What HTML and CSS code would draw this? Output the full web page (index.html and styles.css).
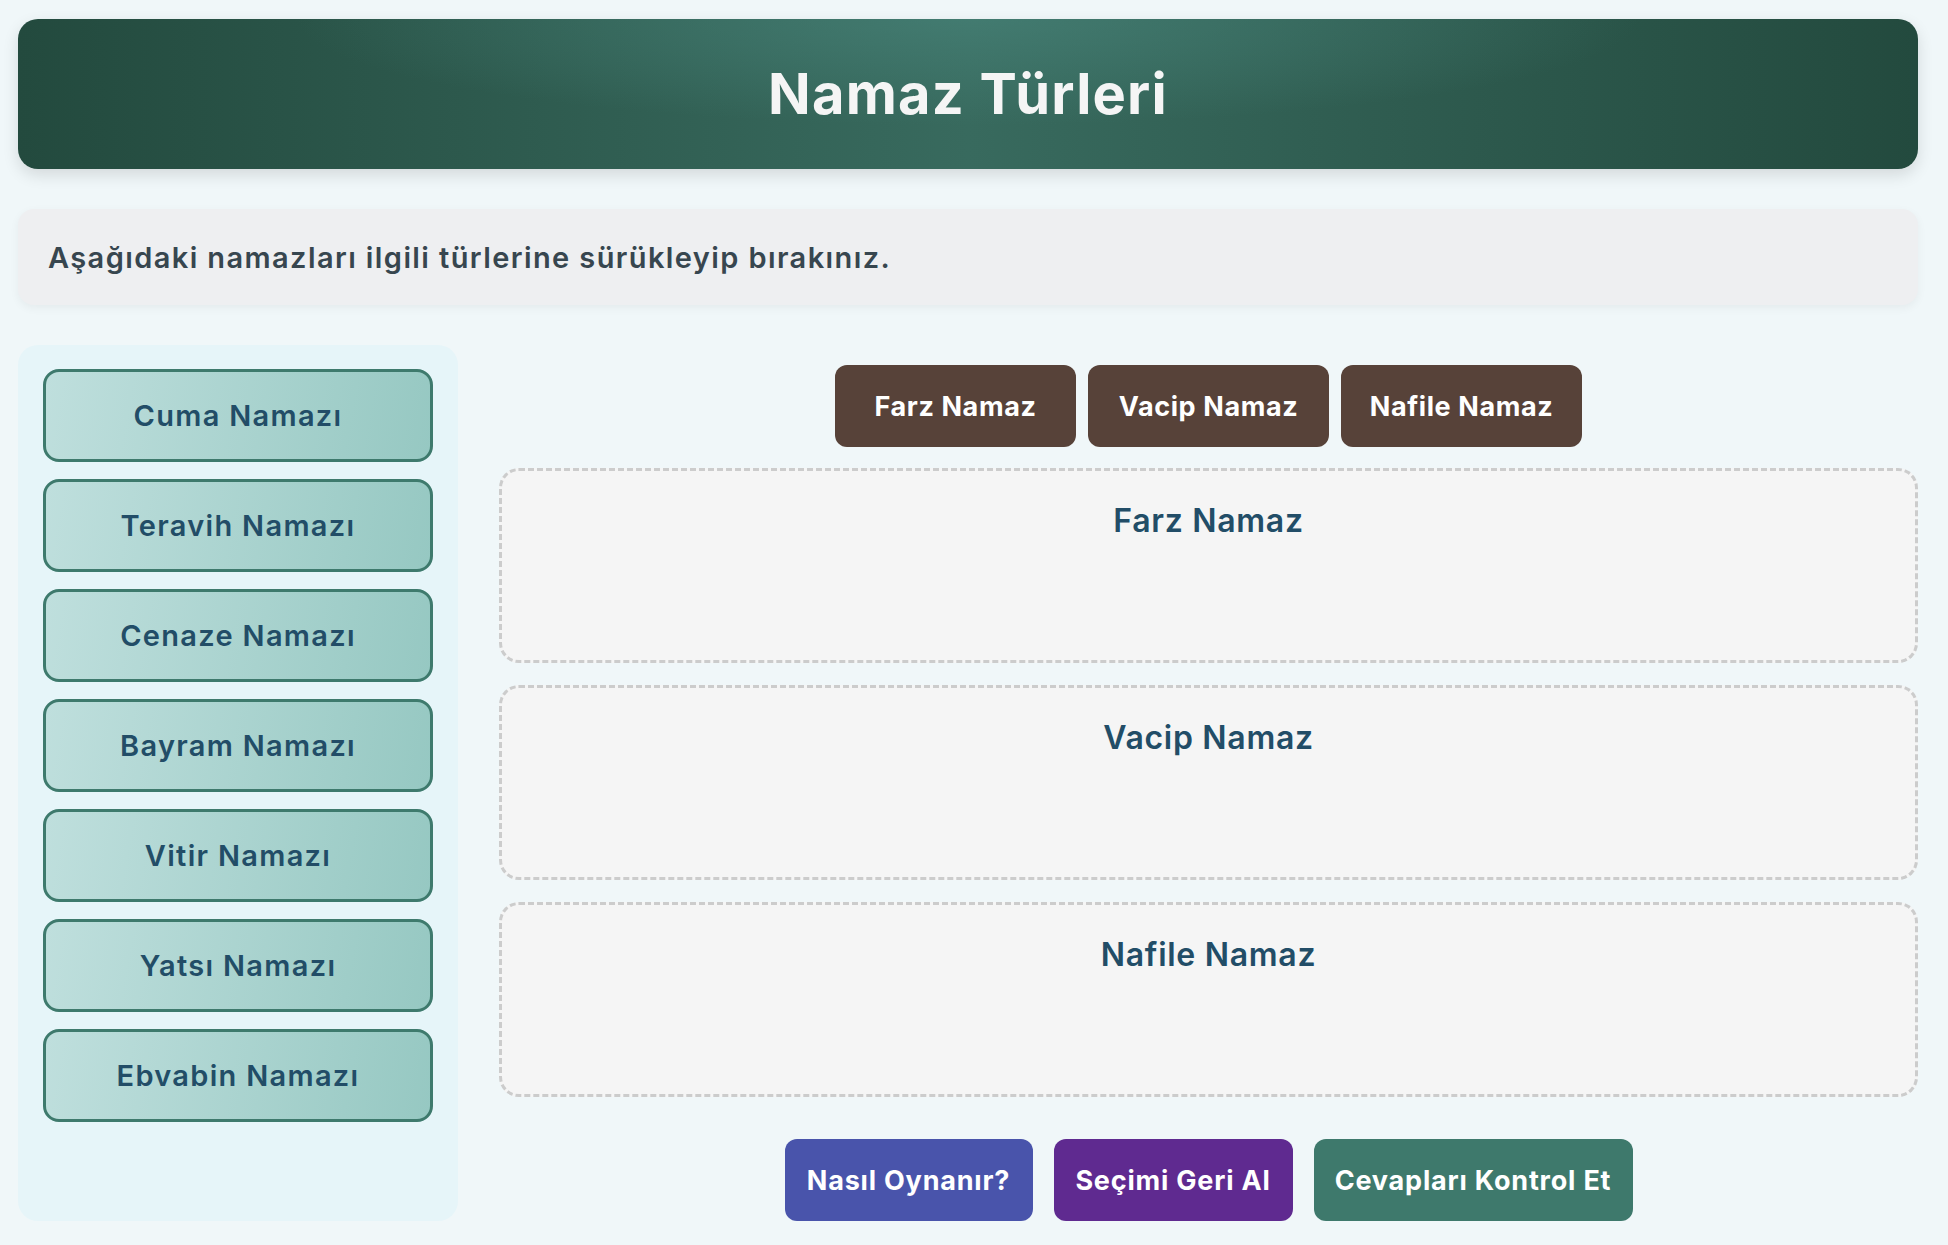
FILE: index.html
```html
<!DOCTYPE html>
<html lang="tr">

<head>
    <meta charset="UTF-8">
    <meta name="viewport" content="width=device-width, initial-scale=1.0">
    <title>Namaz Türleri</title>
    <link rel="stylesheet" href="styles.css">
</head>

<body>
    <div class="page">
        <header class="title-bar">
            <h1>Namaz Türleri</h1>
        </header>

        <div class="instructions">
            <p>Aşağıdaki namazları ilgili türlerine sürükleyip bırakınız.</p>
        </div>

        <div class="game">
            <div class="prayer-list">
                <div class="prayer">Cuma Namazı</div>
                <div class="prayer">Teravih Namazı</div>
                <div class="prayer">Cenaze Namazı</div>
                <div class="prayer">Bayram Namazı</div>
                <div class="prayer">Vitir Namazı</div>
                <div class="prayer">Yatsı Namazı</div>
                <div class="prayer">Ebvabin Namazı</div>
            </div>

            <div class="board">
                <div class="category-buttons">
                    <button class="category-btn">Farz Namaz</button>
                    <button class="category-btn">Vacip Namaz</button>
                    <button class="category-btn">Nafile Namaz</button>
                </div>

                <div class="drop-zones">
                    <div class="drop-zone">
                        <h3>Farz Namaz</h3>
                    </div>
                    <div class="drop-zone">
                        <h3>Vacip Namaz</h3>
                    </div>
                    <div class="drop-zone">
                        <h3>Nafile Namaz</h3>
                    </div>
                </div>

                <div class="action-buttons">
                    <button class="action-btn help-btn">Nasıl Oynanır?</button>
                    <button class="action-btn undo-btn">Seçimi Geri Al</button>
                    <button class="action-btn check-btn">Cevapları Kontrol Et</button>
                </div>
            </div>
        </div>
    </div>
</body>

</html>
```

FILE: styles.css
```css
body {
    margin: 0;
    font-family: Inter, "Open Sans", sans-serif;
    background-color: #f0f7f9;
}

.page {
    padding: 19px 30px 20px 18px;
}

.title-bar {
    height: 150px;
    display: flex;
    align-items: center;
    justify-content: center;
    border-radius: 20px;
    background: radial-gradient(ellipse at 50% 0%, rgba(72, 132, 122, 0.65), rgba(72, 132, 122, 0) 50%),
        linear-gradient(90deg, #234a3e, #386a5e 50%, #234a3e);
    box-shadow: 0 6px 16px rgba(0, 0, 0, 0.12);
}

.title-bar h1 {
    margin: 0;
    font-size: 56px;
    font-weight: 700;
    letter-spacing: 1.2px;
    color: #f5f5f5;
}

.instructions {
    margin-top: 40px;
    height: 96px;
    display: flex;
    align-items: center;
    padding: 0 30px;
    background-color: #eeeff1;
    border-radius: 16px;
    box-shadow: 0 3px 10px rgba(0, 0, 0, 0.05);
}

.instructions p {
    margin: 0;
    font-size: 29px;
    font-weight: 600;
    letter-spacing: 1.4px;
    color: #37464f;
}

.game {
    margin-top: 40px;
    display: flex;
    gap: 41px;
}

.prayer-list {
    width: 390px;
    padding: 24px 25px;
    display: flex;
    flex-direction: column;
    gap: 17px;
    background-color: #e6f5f9;
    border-radius: 20px;
}

.prayer {
    height: 93px;
    box-sizing: border-box;
    display: flex;
    align-items: center;
    justify-content: center;
    border: 3px solid #3e7a6d;
    border-radius: 16px;
    background: linear-gradient(100deg, #bfdfdd, #96c8c2);
    font-size: 29px;
    font-weight: 600;
    letter-spacing: 1.3px;
    color: #224d67;
}

.board {
    flex: 1;
    padding-top: 20px;
    display: flex;
    flex-direction: column;
}

.category-buttons {
    display: flex;
    justify-content: center;
    gap: 12px;
}

.category-btn {
    width: 241px;
    height: 82px;
    border: none;
    border-radius: 12px;
    background-color: #574239;
    color: #fff;
    font-family: inherit;
    font-size: 27px;
    font-weight: 700;
    letter-spacing: 0.6px;
}

.drop-zones {
    margin-top: 21px;
    display: flex;
    flex-direction: column;
    gap: 22px;
}

.drop-zone {
    height: 195px;
    box-sizing: border-box;
    padding-top: 26px;
    border: 3px dashed #cccccc;
    border-radius: 20px;
    background-color: #f5f5f5;
    text-align: center;
}

.drop-zone h3 {
    margin: 0;
    font-size: 32px;
    line-height: 48px;
    font-weight: 600;
    letter-spacing: 0.7px;
    color: #224d67;
}

.action-buttons {
    margin-top: 42px;
    display: flex;
    justify-content: center;
    gap: 21px;
}

.action-btn {
    height: 82px;
    padding: 0;
    border: none;
    border-radius: 12px;
    color: #fff;
    font-family: inherit;
    font-size: 27px;
    font-weight: 700;
    letter-spacing: 0.8px;
}

.help-btn {
    width: 248px;
    background-color: #4954ab;
}

.undo-btn {
    width: 239px;
    background-color: #5f2a90;
}

.check-btn {
    width: 319px;
    background-color: #3e796c;
}
```
